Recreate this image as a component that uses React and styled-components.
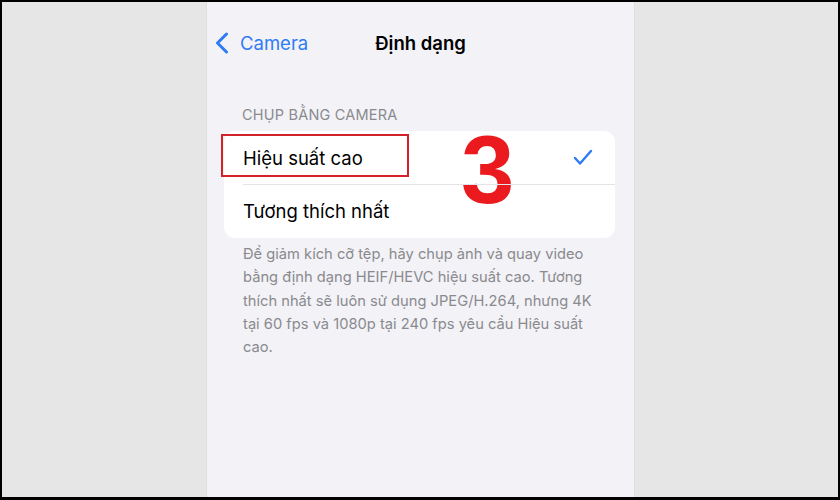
import React from "react";
import styled, { createGlobalStyle } from "styled-components";

const Global = createGlobalStyle`
  html, body {
    margin: 0;
    padding: 0;
    background: #000;
  }
  body {
    font-family: Inter, "Noto Sans", "Liberation Sans", sans-serif;
  }
`;

const Frame = styled.div`
  width: 840px;
  height: 500px;
  box-sizing: border-box;
  border-style: solid;
  border-color: #000;
  border-width: 2px 2px 3px 2px;
  background: #e6e6e6;
  display: flex;
  justify-content: center;
  overflow: hidden;
`;

const Screen = styled.div`
  width: 427px;
  margin-left: 1px;
  background: #f2f2f7;
  border-left: 1px solid #dedee3;
  border-right: 1px solid #dedee3;
  display: flex;
  flex-direction: column;
`;

const NavBar = styled.div`
  display: grid;
  grid-template-columns: 1fr auto 1fr;
  align-items: center;
  height: 44px;
  margin-top: 19px;
  padding: 0 8px;
`;

const BackButton = styled.div`
  display: flex;
  align-items: center;
  gap: 11px;
  color: #2f7bf5;
  font-size: 18.5px;
`;

const Title = styled.div`
  font-size: 18.5px;
  font-weight: 600;
  color: #000;
`;

const SectionHeader = styled.div`
  margin: 41px 0 0 35px;
  font-size: 14.5px;
  color: #8a8a8e;
  letter-spacing: 0.2px;
`;

const Card = styled.div`
  position: relative;
  margin: 8px 19px 0 17px;
  background: #fff;
  border-radius: 11px;
`;

const Row = styled.div`
  position: relative;
  display: flex;
  align-items: center;
  justify-content: space-between;
  height: 53px;
  padding: 0 22px 0 19px;
  font-size: 18.5px;
  color: #000;
  & + & {
    height: 54px;
  }
  & + &::before {
    content: "";
    position: absolute;
    top: 0;
    left: 19px;
    right: 0;
    border-top: 1px solid #e4e4e8;
  }
`;

const Highlight = styled.div`
  position: absolute;
  left: -3px;
  top: 3px;
  width: 184px;
  height: 39px;
  border: 2px solid #d3222a;
`;

const StepNumber = styled.div`
  position: absolute;
  left: 237px;
  top: -9px;
  font-family: "Liberation Sans", Arial, sans-serif;
  font-weight: 700;
  font-size: 96px;
  line-height: 1;
  color: #ea1a1f;
`;

const Footer = styled.p`
  margin: 5px 31px 0 36px;
  font-size: 14.7px;
  line-height: 23.3px;
  color: #8a8a8e;
`;

const Chevron = () => (
  <svg width="14" height="22" viewBox="0 0 14 22">
    <polyline
      points="11.5,2 2.5,11 11.5,20"
      fill="none"
      stroke="#2f7bf5"
      strokeWidth="3"
      strokeLinecap="round"
      strokeLinejoin="round"
    />
  </svg>
);

const Check = () => (
  <svg width="20" height="17" viewBox="0 0 20 17">
    <polyline
      points="2,9 7,14.5 18,2"
      fill="none"
      stroke="#2f7bf5"
      strokeWidth="2.4"
      strokeLinecap="round"
      strokeLinejoin="round"
    />
  </svg>
);

const App = () => (
  <Frame>
    <Global />
    <Screen>
      <NavBar>
        <BackButton>
          <Chevron />
          Camera
        </BackButton>
        <Title>Định dạng</Title>
        <div />
      </NavBar>
      <SectionHeader>CHỤP BẰNG CAMERA</SectionHeader>
      <Card>
        <StepNumber>3</StepNumber>
        <Row>
          <Highlight />
          Hiệu suất cao
          <Check />
        </Row>
        <Row>Tương thích nhất</Row>
      </Card>
      <Footer>
        Để giảm kích cỡ tệp, hãy chụp ảnh và quay video bằng định dạng
        HEIF/HEVC hiệu suất cao. Tương thích nhất sẽ luôn sử dụng JPEG/H.264,
        nhưng 4K tại 60 fps và 1080p tại 240 fps yêu cầu Hiệu suất cao.
      </Footer>
    </Screen>
  </Frame>
);

export default App;
